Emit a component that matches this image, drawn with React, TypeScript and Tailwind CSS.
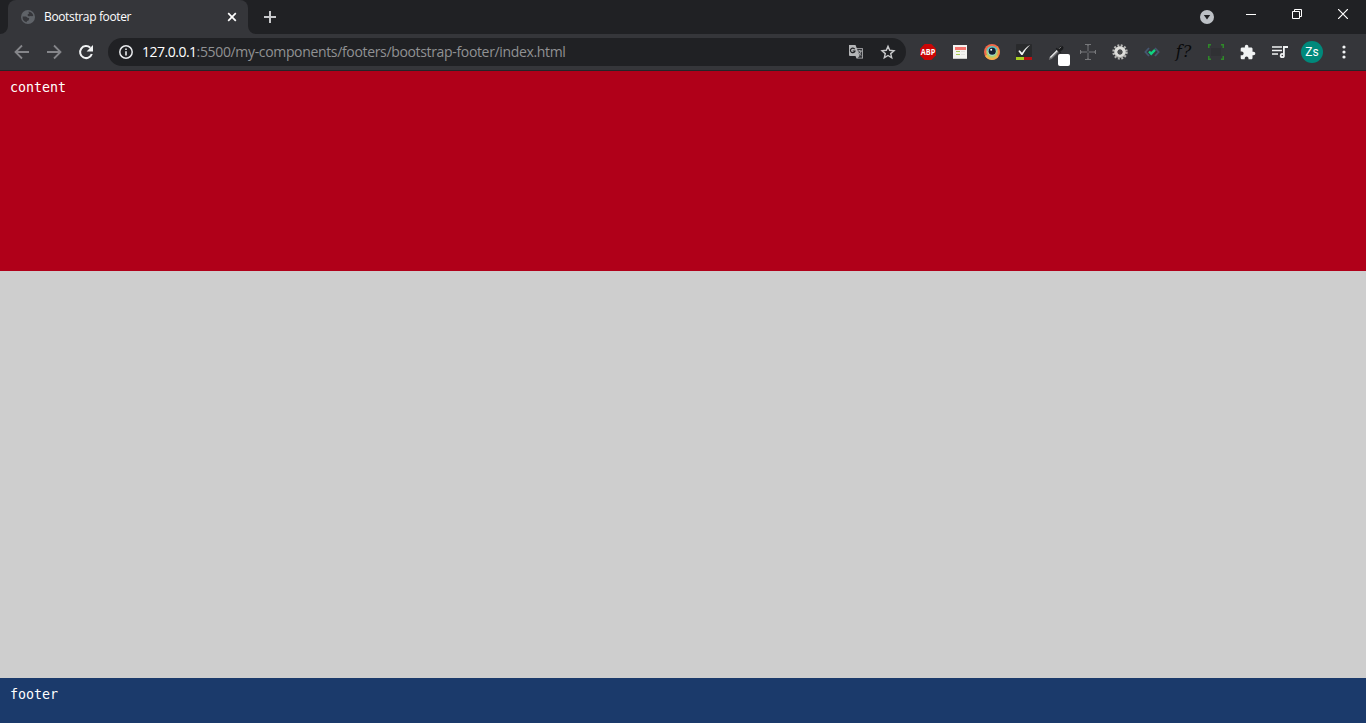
import type { ReactNode } from "react";

function Slot({ children }: { children: ReactNode }) {
  return <div className="flex h-9 w-8 shrink-0 items-center justify-center">{children}</div>;
}

function TabStrip() {
  return (
    <div className="flex h-[34px] bg-[#202124]">
      <svg className="w-2 shrink-0 self-end" height="8" viewBox="0 0 8 8">
        <path d="M8 0v8H0a8 8 0 0 0 8-8z" fill="#35363a" />
      </svg>
      <div className="flex w-60 items-center rounded-t-lg bg-[#35363a] pr-[9px] pl-[13px]">
        <svg width="14" height="14" viewBox="0 0 14 14" className="shrink-0">
          <circle cx="7" cy="7" r="7" fill="#5f6368" />
          <path
            d="M1.600 6.500h3.200c1 0 1.300 1.600 2.700 1.600.8 0 .9.700.4 1.300-.6.700-.1 1.200-1.300 1.400-.8.100-.9.900-.9 1.500A5.600 5.600 0 0 1 1.600 6.500zM7.600 1.500c2.300.2 4.200 1.900 4.700 4.100-.5.900-1.500.9-2.100.5-.7-.4-1.200.1-2 .1-1.100 0-1.900-.700-1.600-1.500.2-.8 1.200-.4 1.400-1.100.2-.6-.7-1.300-.4-2.100z"
            fill="#35363a"
          />
        </svg>
        <span className="ml-[9px] flex-1 font-['Open_Sans',sans-serif] text-[12px] leading-4 tracking-[-0.36px] whitespace-nowrap text-white">
          Bootstrap footer
        </span>
        <svg width="14" height="14" viewBox="0 0 14 14" className="shrink-0">
          <path d="M3.200 3.200l7.600 7.600M10.800 3.200l-7.600 7.600" stroke="#fff" strokeWidth="1.700" />
        </svg>
      </div>
      <svg className="w-2 shrink-0 self-end" height="8" viewBox="0 0 8 8">
        <path d="M0 0v8h8a8 8 0 0 1-8-8z" fill="#35363a" />
      </svg>
      <div className="flex w-7 items-center justify-center">
        <svg width="14" height="14" viewBox="0 0 14 14">
          <path d="M7 1v12M1 7h12" stroke="#c8c9cb" strokeWidth="2" />
        </svg>
      </div>
      <div className="flex-1" />
      <div className="flex w-[42px] items-center justify-center">
        <svg width="14" height="14" viewBox="0 0 14 14">
          <circle cx="7" cy="7" r="7" fill="#bdc1c6" />
          <path d="M3.800 5h6.400L7 9.400z" fill="#202124" />
        </svg>
      </div>
      <div className="flex h-7 w-[138px] items-center">
        <div className="flex w-[46px] justify-center">
          <svg width="10" height="10" viewBox="0 0 10 10">
            <path d="M0 5.500h10" stroke="#fff" />
          </svg>
        </div>
        <div className="flex w-[46px] justify-center">
          <svg width="10" height="10" viewBox="0 0 10 10">
            <path d="M.5 2.500h7v7h-7zM2.500 2V.500h7v7H8" fill="none" stroke="#fff" />
          </svg>
        </div>
        <div className="flex w-[46px] justify-center">
          <svg width="10" height="10" viewBox="0 0 10 10">
            <path d="M0 0l10 10M10 0L0 10" stroke="#fff" strokeWidth="1.200" />
          </svg>
        </div>
      </div>
    </div>
  );
}

function AddressBar() {
  return (
    <div className="flex h-7 w-[798px] items-center rounded-full bg-[#202124] pl-[11px]">
      <svg width="14" height="14" viewBox="0 0 14 14" className="shrink-0">
        <circle cx="7" cy="7" r="6.200" fill="none" stroke="#e8eaed" strokeWidth="1.500" />
        <path d="M6.200 3.500h1.600v1.500H6.200zM6.200 6.200h1.600v4.400H6.200z" fill="#e8eaed" />
      </svg>
      <span className="ml-[9px] flex-1 font-['Open_Sans',sans-serif] text-[14px] leading-5 tracking-[-0.34px] whitespace-nowrap text-[#909193]">
        <span className="tracking-[-0.5px] text-white">127.0.0.1</span>:5500/my-components/footers/bootstrap-footer/index.html
      </span>
      <Slot>
        <svg width="16" height="16" viewBox="0 0 16 16">
          <path d="M1 1h6.500l1.200 3H14a1 1 0 0 1 1 1v9.500H8.500L7.500 12H2a1 1 0 0 1-1-1z" fill="#b4b5b7" />
          <path d="M9 4.800h5.200v8.900H9.600l2-1.700z" fill="#303236" />
          <path d="M6.700 5.100A2.300 2.300 0 1 0 7 7H4.700" fill="none" stroke="#202124" strokeWidth="1.200" />
          <path
            d="M9.600 7h4.200M11.700 6v1M13 7c-.3 2-1.300 3.300-2.700 4.200M10.500 8.200c.6 1.500 1.500 2.400 2.800 3.300"
            fill="none"
            stroke="#b4b5b7"
          />
        </svg>
      </Slot>
      <Slot>
        <svg width="16" height="16" viewBox="0 0 16 16">
          <path
            d="M8 2.300l1.700 4 4.300.4-3.300 2.900 1 4.200L8 11.500l-3.700 2.300 1-4.200L2 6.700l4.300-.4z"
            fill="none"
            stroke="#c8c9cb"
            strokeWidth="1.400"
          />
        </svg>
      </Slot>
      <div className="w-0.5" />
    </div>
  );
}

function Extensions() {
  return (
    <div className="ml-1.5 flex items-center">
      <Slot>
        <svg width="16" height="16" viewBox="0 0 16 16">
          <path d="M4.700 0h6.600L16 4.700v6.600L11.300 16H4.700L0 11.300V4.700z" fill="#cb0606" />
          <text
            x="8"
            y="10.900"
            textAnchor="middle"
            textLength="14.500"
            lengthAdjust="spacingAndGlyphs"
            className="fill-white font-['Open_Sans',sans-serif] text-[8px] font-bold"
          >
            ABP
          </text>
        </svg>
      </Slot>
      <Slot>
        <svg width="16" height="16" viewBox="0 0 16 16">
          <path d="M1 1h14v14H1z" fill="#f3f3f0" />
          <path d="M1 14h14v1H1z" fill="#c9cac7" />
          <path d="M3 3h11v3H3z" fill="#f5736d" />
          <path d="M4 7.500h4M4 10.500h4" stroke="#a9cb55" />
          <path d="M9 7.500h4M9 10.500h4" stroke="#e2e3df" />
        </svg>
      </Slot>
      <Slot>
        <svg width="16" height="16" viewBox="0 0 16 16">
          <circle cx="8" cy="8" r="8" fill="#ef694b" />
          <path d="M1 12a8 8 0 0 0 13.500.500L12 9 4 10z" fill="#f2b34a" />
          <path d="M13 2a8 8 0 0 1 1.500 10L10 9z" fill="#f48c43" />
          <circle cx="8" cy="8" r="5.800" fill="#a9cf72" />
          <path d="M2.600 6.500a5.800 5.800 0 0 1 11-.500L8 8z" fill="#49c3ca" />
          <circle cx="8" cy="7.500" r="4.300" fill="#a5dcdc" />
          <circle cx="8.200" cy="7.200" r="3.600" fill="#122032" />
          <circle cx="7.200" cy="5.700" r="1" fill="#fff" />
        </svg>
      </Slot>
      <Slot>
        <svg width="16" height="16" viewBox="0 0 16 16">
          <rect width="16" height="13" rx="1" fill="#292a2c" />
          <path d="M0 13h8v3H0z" fill="#a8cf20" />
          <path d="M8 13h8v3H8z" fill="#b70f13" />
          <path d="M2.300 7.100l1.400-.8L6 8.700C8 5.700 10.300 3.100 14.200.800 11 4 8.700 7.100 6.600 11H5.300z" fill="#f4f4f4" />
        </svg>
      </Slot>
      <Slot>
        <svg width="22" height="22" viewBox="0 0 22 22" className="shrink-0 translate-x-[3px] translate-y-[3px]">
          <path d="M1.300 13.500l7.500-7.500 2 2-7 7-3 1z" fill="#6f7073" />
          <path d="M1.800 13l7-7 1 1-7 7z" fill="#e2e2e3" />
          <path d="M8.200 4.200l4.600 4.600M10 6l2.600-3.200c1-1 2.800.5 1.900 1.900L11.500 7.500z" fill="#1b1c1e" stroke="#1b1c1e" strokeWidth="1.500" />
          <path d="M11 4.800l2-2" stroke="#888" />
          <rect x="10" y="10" width="12" height="12" rx="2" fill="#fff" />
        </svg>
      </Slot>
      <Slot>
        <svg width="16" height="16" viewBox="0 0 16 16">
          <path
            d="M7.500 1v14M8.500 1v14M1 7.500h14M1 8.500h14M5 .500h6M5 15.500h6M.500 6v4M15.500 6v4"
            fill="none"
            stroke="#76777a"
            strokeWidth="1"
          />
          <path d="M8 1.500v13M1.500 8h13" stroke="#35363a" strokeWidth="1" />
        </svg>
      </Slot>
      <Slot>
        <svg width="16" height="16" viewBox="0 0 16 16">
          <circle cx="8" cy="8" r="6.500" fill="none" stroke="#b5b5b3" strokeWidth="2.400" strokeDasharray="1.900 1.500" />
          <circle cx="8" cy="8" r="4.100" fill="none" stroke="#dededb" strokeWidth="3.400" />
          <circle cx="8" cy="8" r="2.500" fill="#4a4b4c" />
          <path d="M3 10.500a5.600 5.600 0 0 0 10 0" fill="none" stroke="#a3a3a0" />
        </svg>
      </Slot>
      <Slot>
        <svg width="16" height="16" viewBox="0 0 16 16">
          <path d="M5 4L1.400 8 5 12M11 4l3.600 4-3.600 4" fill="none" stroke="#46566f" strokeWidth="1.800" />
          <path d="M5 7.500l2.200 2.200 3.800-3.800" fill="none" stroke="#10d381" strokeWidth="2.400" />
        </svg>
      </Slot>
      <Slot>
        <span className="font-['DejaVu_Serif',serif] text-[16px] leading-4 tracking-[1px] text-[#08090a] italic">f?</span>
      </Slot>
      <Slot>
        <svg width="16" height="16" viewBox="0 0 16 16">
          <path d="M3 4h10v8H3z" fill="#303134" />
          <path d="M0 4V0h3v1.500H1.500V4zM13 0h3v4h-1.500V1.500H13zM0 12h1.500v2.500H3V16H0zM14.500 12H16v4h-3v-1.500h1.500z" fill="#2e8928" />
        </svg>
      </Slot>
      <Slot>
        <svg width="16" height="16" viewBox="1 0 23 23">
          <path
            d="M20.500 11H19V7c0-1.100-.9-2-2-2h-4V3.500C13 2.120 11.880 1 10.500 1S8 2.120 8 3.500V5H4c-1.100 0-1.990.9-1.990 2v3.800H3.500c1.490 0 2.700 1.210 2.700 2.700s-1.210 2.700-2.700 2.700H2V20c0 1.100.9 2 2 2h3.800v-1.500c0-1.490 1.210-2.700 2.700-2.700 1.490 0 2.700 1.210 2.700 2.700V22H17c1.100 0 2-.9 2-2v-4h1.500c1.380 0 2.500-1.120 2.500-2.500S21.880 11 20.500 11z"
            fill="#f1f3f4"
          />
        </svg>
      </Slot>
      <Slot>
        <svg width="16" height="14" viewBox="0 0 16 14">
          <path d="M0 2h10M0 5.500h10M0 9h6" stroke="#f1f3f4" strokeWidth="1.700" />
          <path d="M11 1.100h5v1.800h-3.200v7.600A2.500 2.500 0 1 1 11 8.200z" fill="#f1f3f4" />
          <circle cx="10.300" cy="10.500" r=".8" fill="#35363a" />
        </svg>
      </Slot>
      <Slot>
        <div className="flex size-[22px] items-center justify-center rounded-full bg-[#00897b] font-[Roboto,sans-serif] text-[12px] leading-none text-white">
          Zs
        </div>
      </Slot>
      <Slot>
        <svg width="4" height="14" viewBox="0 0 4 14">
          <circle cx="2" cy="2" r="1.600" fill="#f1f3f4" />
          <circle cx="2" cy="7" r="1.600" fill="#f1f3f4" />
          <circle cx="2" cy="12" r="1.600" fill="#f1f3f4" />
        </svg>
      </Slot>
    </div>
  );
}

function Toolbar() {
  return (
    <div className="flex h-[37px] items-start border-b border-[#242528] bg-[#35363a] pl-1.5">
      <Slot>
        <svg width="16" height="16" viewBox="0 0 16 16">
          <path d="M15 8H2.500M8 1.500L1.500 8 8 14.500" fill="none" stroke="#85868a" strokeWidth="1.800" />
        </svg>
      </Slot>
      <Slot>
        <svg width="16" height="16" viewBox="0 0 16 16">
          <path d="M1 8h12.500M8 1.500L14.500 8 8 14.500" fill="none" stroke="#85868a" strokeWidth="1.800" />
        </svg>
      </Slot>
      <Slot>
        <svg width="16" height="16" viewBox="0 0 16 16">
          <path d="M13.800 10A6 6 0 1 1 12.300 3.800" fill="none" stroke="#f1f3f4" strokeWidth="2" />
          <path d="M15 1v6.400H8.600z" fill="#f1f3f4" />
        </svg>
      </Slot>
      <div className="flex h-9 items-center pl-1.5">
        <AddressBar />
      </div>
      <Extensions />
    </div>
  );
}

export default function App() {
  return (
    <div className="flex h-[723px] w-[1366px] flex-col overflow-hidden bg-[#cecece]">
      <TabStrip />
      <Toolbar />
      <main className="h-[200px] bg-[#b00019] px-2.5 pt-[9px] font-['DejaVu_Sans_Mono',monospace] text-[13.3px] leading-4 text-white">
        content
      </main>
      <div className="flex-1" />
      <footer className="h-[45px] bg-[#1b3a6b] px-2.5 pt-[9px] font-['DejaVu_Sans_Mono',monospace] text-[13.3px] leading-4 text-white">
        footer
      </footer>
    </div>
  );
}
